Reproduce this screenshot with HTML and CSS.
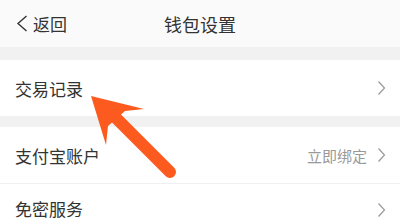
FILE: index.html
```html
<!DOCTYPE html>
<html lang="zh-CN">
<head>
<meta charset="utf-8">
<link rel="stylesheet" href="styles.css">
</head>
<body>
<div class="page">
  <header class="nav">
    <div class="back">
      <svg class="back-icon" width="12" height="17" viewBox="0 0 12 17"><path d="M10.5 1 L2 8.5 L10.5 16" fill="none" stroke="#333" stroke-width="1.4"/></svg>
      <span>返回</span>
    </div>
    <div class="title">钱包设置</div>
  </header>
  <div class="gap"></div>
  <div class="row">
    <span class="label">交易记录</span>
    <span class="right"><svg class="chev" width="9" height="16" viewBox="0 0 9 16"><path d="M1.5 1.5 L7.5 8 L1.5 14.5" fill="none" stroke="#999" stroke-width="1.2"/></svg></span>
  </div>
  <div class="gap"></div>
  <div class="row">
    <span class="label">支付宝账户</span>
    <span class="right"><span class="hint">立即绑定</span><svg class="chev" width="9" height="16" viewBox="0 0 9 16"><path d="M1.5 1.5 L7.5 8 L1.5 14.5" fill="none" stroke="#999" stroke-width="1.2"/></svg></span>
  </div>
  <div class="row divided">
    <span class="label">免密服务</span>
    <span class="right"><svg class="chev" width="9" height="16" viewBox="0 0 9 16"><path d="M1.5 1.5 L7.5 8 L1.5 14.5" fill="none" stroke="#999" stroke-width="1.2"/></svg></span>
  </div>
  <svg class="pointer" width="400" height="223" viewBox="0 0 400 223">
    <polygon points="91,96 144,109 125,111 108,126 106,145" fill="#fc5a1e"/>
    <line x1="112" y1="114" x2="170" y2="172" stroke="#fc5a1e" stroke-width="12" stroke-linecap="round"/>
  </svg>
</div>
</body>
</html>
```
FILE: styles.css
```css
html, body {
  margin: 0;
  padding: 0;
  background: #ffffff;
}
.page {
  position: relative;
  width: 400px;
  height: 223px;
  overflow: hidden;
  font-family: "Noto Sans CJK SC", "Noto Sans", sans-serif;
  color: #333333;
}
.nav {
  height: 47px;
  background: #fafafa;
  display: flex;
  align-items: center;
  position: relative;
}
.back {
  display: flex;
  align-items: center;
  gap: 5px;
  padding-left: 16px;
  font-size: 17px;
  color: #333;
}
.title {
  position: absolute;
  left: 0;
  right: 0;
  text-align: center;
  font-size: 18px;
  color: #333;
  pointer-events: none;
}
.gap {
  height: 13px;
  background: #f1f1f1;
}
.gap + .row + .gap {
  height: 11px;
}
.row {
  height: 56px;
  display: flex;
  align-items: center;
  justify-content: space-between;
  padding: 0 14px 0 15px;
  background: #fff;
  font-size: 17px;
}
.row.divided {
  border-top: 1px solid #f0f0f0;
  height: 55px;
  align-items: flex-start;
  padding-top: 12px;
  box-sizing: border-box;
}
.label {
  color: #333;
}
.right {
  display: flex;
  align-items: center;
  gap: 10px;
}
.row.divided .right {
  padding-top: 6px;
}
.hint {
  font-size: 15px;
  color: #999;
}
.chev {
  display: block;
}
.pointer {
  position: absolute;
  left: 0;
  top: 0;
}
```
